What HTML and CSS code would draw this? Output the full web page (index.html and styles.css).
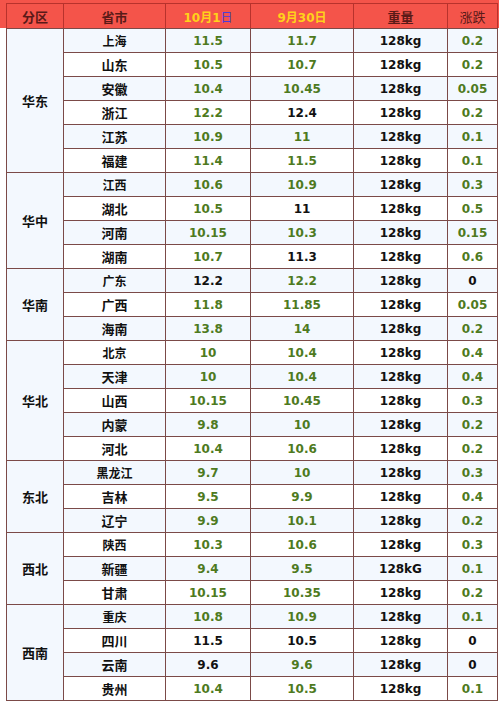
FILE: index.html
```html
<!DOCTYPE html>
<html lang="zh">
<head>
<meta charset="utf-8">
<link rel="stylesheet" href="styles.css">
</head>
<body>
<div class="page">
<table class="price">
<colgroup>
<col class="c1"><col class="c2"><col class="c3"><col class="c4"><col class="c5"><col class="c6">
</colgroup>
<thead>
<tr><th>分区</th><th>省市</th><th class="date">10月1<span class="blue">日</span></th><th class="date">9月30日</th><th>重量</th><th class="thin">涨跌</th></tr>
</thead>
<tbody>
<tr class="b"><td class="reg" rowspan="6">华东</td><td>上海</td><td class="g">11.5</td><td class="g">11.7</td><td>128kg</td><td class="g">0.2</td></tr>
<tr><td>山东</td><td class="g">10.5</td><td class="g">10.7</td><td>128kg</td><td class="g">0.2</td></tr>
<tr class="b"><td>安徽</td><td class="g">10.4</td><td class="g">10.45</td><td>128kg</td><td class="g">0.05</td></tr>
<tr><td>浙江</td><td class="g">12.2</td><td>12.4</td><td>128kg</td><td class="g">0.2</td></tr>
<tr class="b"><td>江苏</td><td class="g">10.9</td><td class="g">11</td><td>128kg</td><td class="g">0.1</td></tr>
<tr class="sep"><td>福建</td><td class="g">11.4</td><td class="g">11.5</td><td>128kg</td><td class="g">0.1</td></tr>
<tr class="b"><td class="reg" rowspan="4">华中</td><td>江西</td><td class="g">10.6</td><td class="g">10.9</td><td>128kg</td><td class="g">0.3</td></tr>
<tr><td>湖北</td><td class="g">10.5</td><td>11</td><td>128kg</td><td class="g">0.5</td></tr>
<tr class="b"><td>河南</td><td class="g">10.15</td><td class="g">10.3</td><td>128kg</td><td class="g">0.15</td></tr>
<tr><td>湖南</td><td class="g">10.7</td><td>11.3</td><td>128kg</td><td class="g">0.6</td></tr>
<tr class="b"><td class="reg" rowspan="3">华南</td><td>广东</td><td>12.2</td><td class="g">12.2</td><td>128kg</td><td>0</td></tr>
<tr><td>广西</td><td class="g">11.8</td><td class="g">11.85</td><td>128kg</td><td class="g">0.05</td></tr>
<tr class="b"><td>海南</td><td class="g">13.8</td><td class="g">14</td><td>128kg</td><td class="g">0.2</td></tr>
<tr><td class="reg" rowspan="5">华北</td><td>北京</td><td class="g">10</td><td class="g">10.4</td><td>128kg</td><td class="g">0.4</td></tr>
<tr class="b"><td>天津</td><td class="g">10</td><td class="g">10.4</td><td>128kg</td><td class="g">0.4</td></tr>
<tr><td>山西</td><td class="g">10.15</td><td class="g">10.45</td><td>128kg</td><td class="g">0.3</td></tr>
<tr class="b"><td>内蒙</td><td class="g">9.8</td><td class="g">10</td><td>128kg</td><td class="g">0.2</td></tr>
<tr><td>河北</td><td class="g">10.4</td><td class="g">10.6</td><td>128kg</td><td class="g">0.2</td></tr>
<tr class="b"><td class="reg" rowspan="3">东北</td><td>黑龙江</td><td class="g">9.7</td><td class="g">10</td><td>128kg</td><td class="g">0.3</td></tr>
<tr><td>吉林</td><td class="g">9.5</td><td class="g">9.9</td><td>128kg</td><td class="g">0.4</td></tr>
<tr class="b"><td>辽宁</td><td class="g">9.9</td><td class="g">10.1</td><td>128kg</td><td class="g">0.2</td></tr>
<tr><td class="reg" rowspan="3">西北</td><td>陕西</td><td class="g">10.3</td><td class="g">10.6</td><td>128kg</td><td class="g">0.3</td></tr>
<tr class="b"><td>新疆</td><td class="g">9.4</td><td class="g">9.5</td><td>128kG</td><td class="g">0.1</td></tr>
<tr><td>甘肃</td><td class="g">10.15</td><td class="g">10.35</td><td>128kg</td><td class="g">0.2</td></tr>
<tr class="b"><td class="reg" rowspan="4">西南</td><td>重庆</td><td class="g">10.8</td><td class="g">10.9</td><td>128kg</td><td class="g">0.1</td></tr>
<tr><td>四川</td><td>11.5</td><td>10.5</td><td>128kg</td><td>0</td></tr>
<tr class="b"><td>云南</td><td>9.6</td><td class="g">9.6</td><td>128kg</td><td>0</td></tr>
<tr><td>贵州</td><td class="g">10.4</td><td class="g">10.5</td><td>128kg</td><td class="g">0.1</td></tr>
</tbody>
</table>
</div>
</body>
</html>
```
FILE: styles.css
```css
html, body {
  margin: 0;
  padding: 0;
  background: #ffffff;
}
.page {
  width: 499px;
  padding: 3px 2px 0 6px;
  box-sizing: border-box;
  background: linear-gradient(to bottom, #f4544a 0, #f4544a 28px, #ffffff 28px);
}
.price {
  width: 491px;
  border-collapse: collapse;
  table-layout: fixed;
  font-family: "DejaVu Sans", "Noto Sans CJK SC", sans-serif;
  font-weight: bold;
  font-size: 12px;
  color: #111111;
}
.c1 { width: 57px; }
.c2 { width: 102px; }
.c3 { width: 85px; }
.c4 { width: 103px; }
.c5 { width: 94px; }
.c6 { width: 50px; }
.price th, .price td {
  border: 1px solid #7b4a48;
  text-align: center;
  padding: 0;
}
.price thead tr { height: 25px; }
.price th {
  background: #f4544a;
  color: #5a1a18;
  font-family: "Noto Sans CJK SC", sans-serif;
  font-size: 13px;
  font-weight: bold;
  border-color: #b8322c;
  border-bottom-color: #7b4a48;
}
.price th.thin { font-weight: normal; }
.price th.date {
  color: #ffd21a;
  font-family: "DejaVu Sans", "Noto Sans CJK SC", sans-serif;
  font-size: 12px;
}
.price th .blue { color: #4b3cd8; font-family: "Noto Sans CJK SC", sans-serif; font-weight: normal; }
.price tbody tr { height: 24px; background: #ffffff; }
.price tbody tr.b { background: #f3f8fe; }
.price tbody td:first-child, .price td.reg { font-family: "Noto Sans CJK SC", sans-serif; font-size: 13px; }
.price td.reg { background: #f3f8fe; }
.price td.g { color: #4e7a1e; }
```
